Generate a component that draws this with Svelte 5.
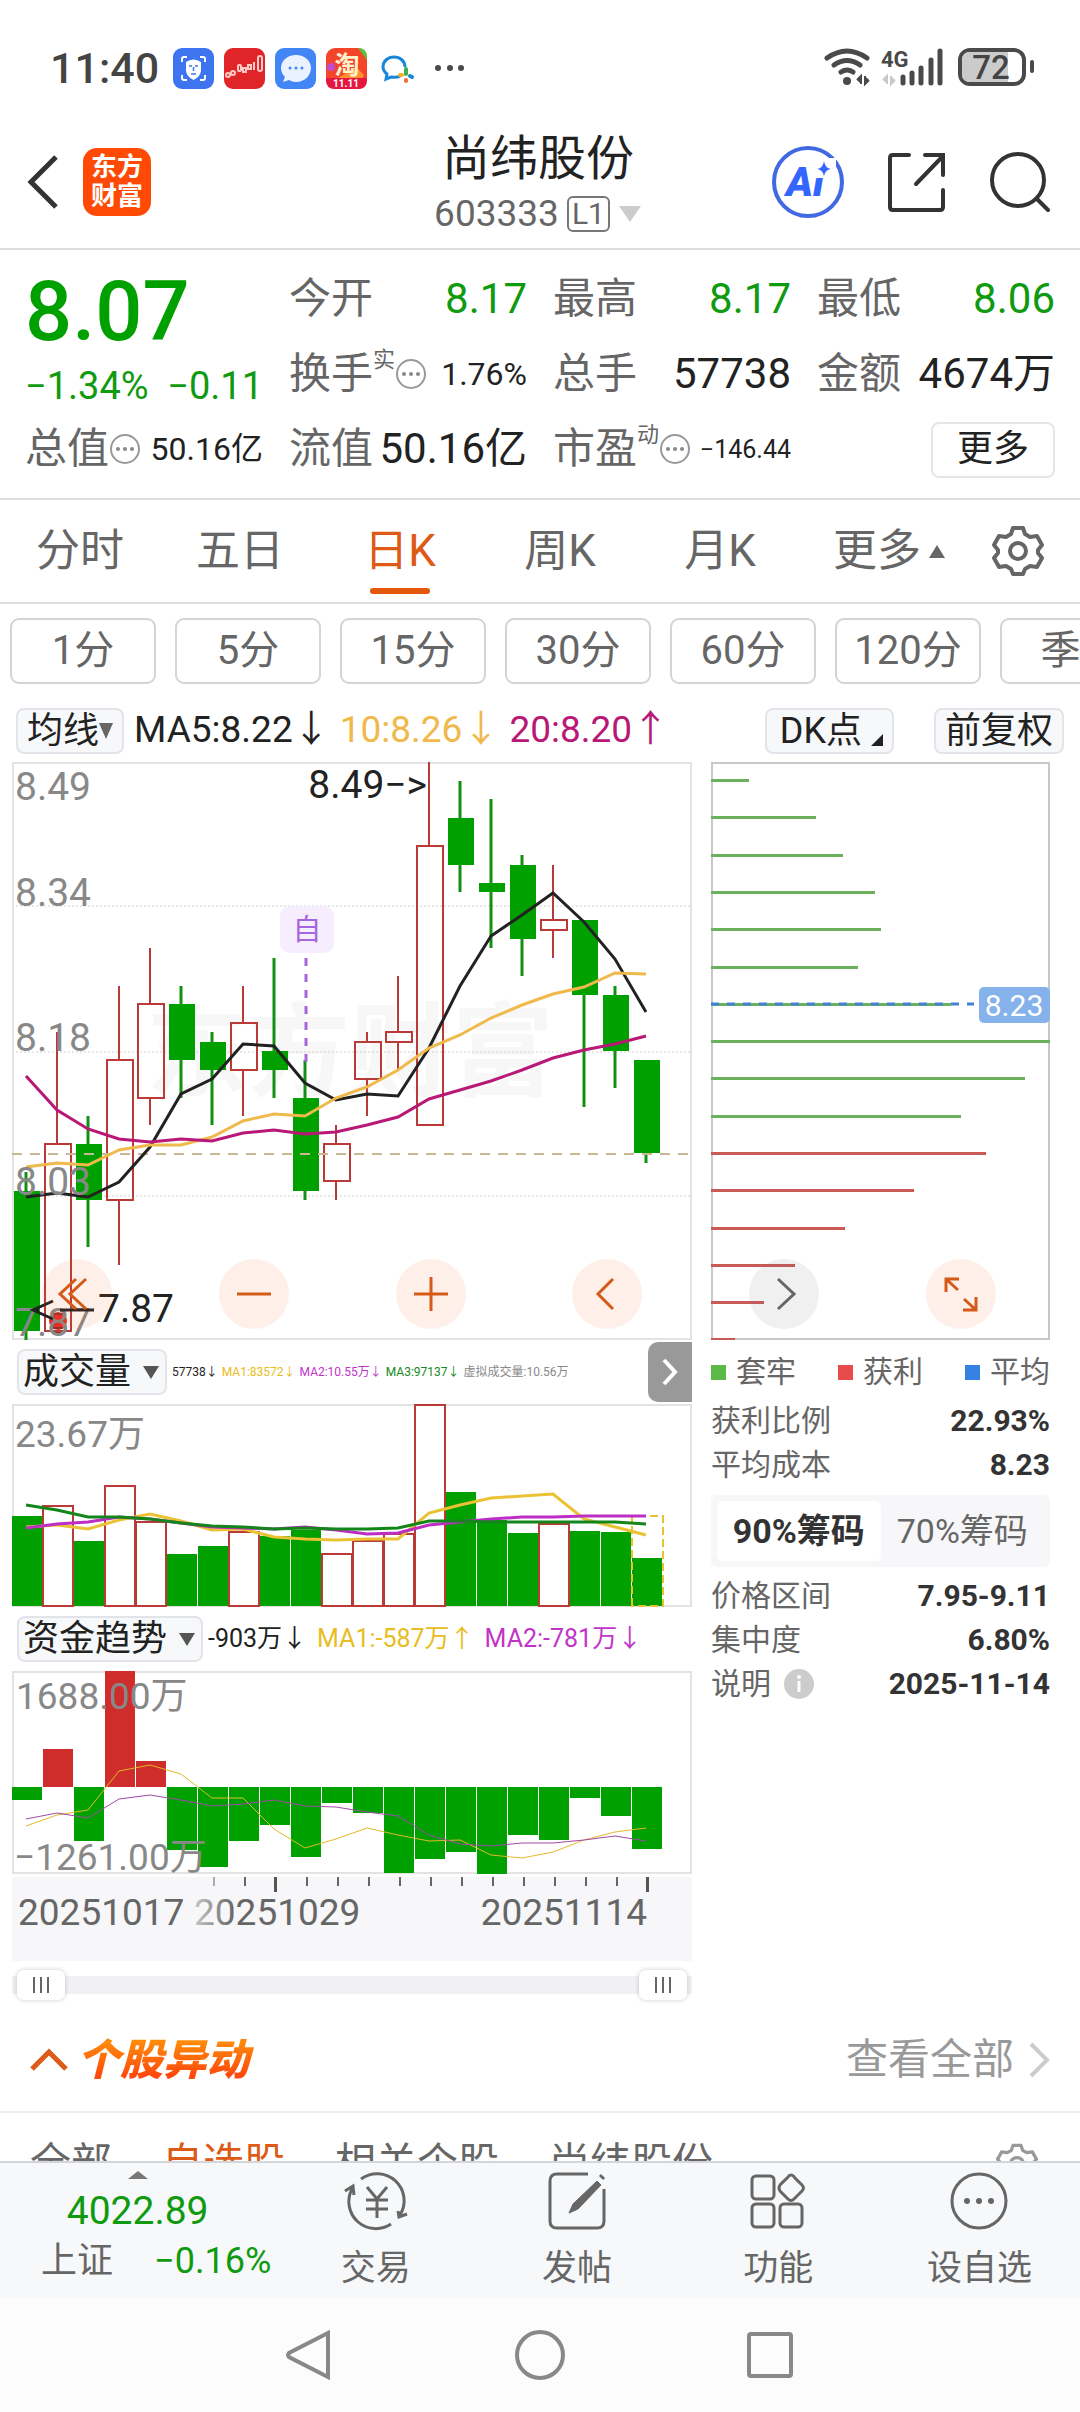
<script lang="ts">
  type Candle = { o: number; c: number; h: number; l: number };

  const STEP = 31;
  const TOP_PRICE = 8.49;
  const PX_PER_YUAN = 932;

  // open, close, high, low
  const candles: Candle[] = [
    [8.03, 7.88, 8.05, 7.87], [7.88, 8.08, 8.2, 7.88], [8.08, 8.02, 8.11, 7.97],
    [8.02, 8.17, 8.25, 7.95], [8.13, 8.23, 8.29, 8.1], [8.23, 8.17, 8.25, 8.13],
    [8.19, 8.16, 8.2, 8.1], [8.16, 8.21, 8.25, 8.11], [8.18, 8.16, 8.28, 8.13],
    [8.13, 8.03, 8.17, 8.02], [8.04, 8.08, 8.1, 8.02], [8.15, 8.19, 8.2, 8.11],
    [8.19, 8.2, 8.26, 8.16], [8.1, 8.4, 8.49, 8.1], [8.43, 8.38, 8.47, 8.35],
    [8.36, 8.35, 8.45, 8.29], [8.38, 8.3, 8.39, 8.26], [8.31, 8.32, 8.38, 8.28],
    [8.32, 8.24, 8.32, 8.12], [8.24, 8.18, 8.25, 8.14], [8.17, 8.07, 8.17, 8.06],
  ].map(([o, c, h, l]) => ({ o, c, h, l }));

  const ma5 = [435, 431, 435, 420, 385, 332, 317, 282, 284, 321, 338, 332, 334, 286, 224, 174, 153, 131, 160, 197, 250];
  const ma10 = [405, 401, 403, 388, 383, 383, 375, 359, 352, 354, 336, 325, 308, 286, 273, 256, 243, 232, 225, 211, 212];
  const ma20 = [314, 348, 367, 377, 380, 377, 379, 371, 368, 372, 370, 363, 355, 337, 328, 319, 308, 296, 288, 282, 274];

  const volumeTops = [112, 102, 137, 82, 118, 150, 142, 128, 132, 126, 150, 137, 130, 1, 88, 116, 129, 120, 127, 128, 154];
  const volMa1 = [123, 121, 125, 116, 110, 117, 126, 125, 133, 135, 136, 135, 135, 109, 101, 94, 92, 90, 115, 123, 131];
  const volMa2 = [124, 120, 118, 113, 115, 119, 123, 124, 125, 123, 126, 130, 129, 121, 118, 115, 113, 113, 112, 112, 112];
  const volMa3 = [101, 106, 113, 113, 115, 119, 122, 123, 125, 124, 125, 125, 124, 117, 117, 118, 118, 118, 118, 118, 120];

  const FUND_ZERO = 116;
  const fundEnds = [129, 78, 170, 0, 90, 179, 196, 170, 154, 186, 132, 142, 202, 188, 181, 203, 164, 169, 127, 145, 178];
  const fundMa1 = [155, 144, 139, 100, 94, 103, 127, 127, 158, 177, 168, 157, 164, 170, 169, 184, 187, 181, 169, 161, 157];
  const fundMa2 = [148, 142, 147, 128, 124, 129, 135, 133, 129, 135, 136, 141, 145, 164, 173, 175, 172, 172, 169, 165, 170];

  const chips = [38, 105, 132, 164, 170, 147, 240, 339, 314, 250, 275, 203, 134, 84, 53, 24];

  const gridLines = [144, 290, 434];
  const priceLabels = [
    { y: 38, text: '8.49' },
    { y: 144, text: '8.34' },
    { y: 289, text: '8.18' },
    { y: 433, text: '8.03' },
    { y: 574, text: '7.87' },
  ];

  const ranges = ['分时', '五日', '日K', '周K', '月K'];
  const minutes = ['1分', '5分', '15分', '30分', '60分', '120分', '季K'];
  const moveTabs = ['全部', '自选股', '相关个股', '尚纬股份'];

  let range = $state('日K');
  let chipShare = $state(90);
  let moveTab = $state('自选股');
  let from = $state(0);
  let to = $state(100);

  const y = (price: number) => Math.round((TOP_PRICE - price) * PX_PER_YUAN);
  const line = (ys: number[]) => ys.map((v, i) => `${14 + STEP * i},${v}`).join(' ');
</script>

{#snippet dots()}
  <svg class="dots" viewBox="0 0 32 32" aria-hidden="true">
    <circle cx="16" cy="16" r="14" fill="none" stroke="#999" stroke-width="2" />
    <circle cx="9" cy="16" r="2" fill="#888" /><circle cx="16" cy="16" r="2" fill="#888" /><circle cx="23" cy="16" r="2" fill="#888" />
  </svg>
{/snippet}

{#snippet gear(stroke: string)}
  <svg class="gear" viewBox="0 0 52 52" fill="none" {stroke} stroke-width="4" stroke-linejoin="round" aria-hidden="true">
    <path d="M21 3h10l2 6 5 3 7-1 5 9-4 5v3l4 5-5 9-7-1-5 3-2 5H21l-2-5-5-3-7 1-5-9 4-5v-3l-4-5 5-9 7 1 5-3z" />
    <circle cx="26" cy="26" r="8" />
  </svg>
{/snippet}

<div class="app">
  <div class="status">
    <div class="status-left">
      <span class="time">11:40</span>
      <svg viewBox="0 0 41 41" aria-hidden="true">
        <rect width="41" height="41" rx="9" fill="#3f74f0" />
        <path d="M9 14v-3q0-2 2-2h3M27 9h3q2 0 2 2v3M32 27v3q0 2-2 2h-3M14 32h-3q-2 0-2-2v-3" fill="none" stroke="#fff" stroke-width="2" />
        <path d="M13 14q7.500-5 15 0v9q-1 6-7.500 9-6.500-3-7.500-9z" fill="#fff" />
        <path d="M16 18h3M22 18h3M20.500 19v4M18 26h5" stroke="#3f74f0" stroke-width="1.500" />
      </svg>
      <svg viewBox="0 0 41 41" aria-hidden="true">
        <rect width="41" height="41" rx="9" fill="#df2527" />
        <g fill="none" stroke="#ffc9c6" stroke-width="2">
          <circle cx="4" cy="27" r="2" /><circle cx="9" cy="25" r="2" />
          <rect x="14" y="17" width="3" height="6" rx="1" /><rect x="19" y="20" width="3" height="4" /><rect x="24" y="17" width="3" height="4" />
          <path d="M30 14v8" /><rect x="34" y="8" width="4" height="15" rx="2" />
        </g>
      </svg>
      <svg viewBox="0 0 41 41" aria-hidden="true">
        <rect width="41" height="41" rx="9" fill="#4285f4" />
        <path d="M21 7c9 0 15 6 15 13s-6 14-15 14q-4 0-7-2l-6 2 2-5q-4-4-4-9C6 13 12 7 21 7z" fill="#eaf2ff" />
        <circle cx="15" cy="20" r="1.500" fill="#4285f4" /><circle cx="21" cy="20" r="1.500" fill="#4285f4" /><circle cx="27" cy="20" r="1.500" fill="#4285f4" />
      </svg>
      <svg viewBox="0 0 41 41" aria-hidden="true">
        <rect width="41" height="41" rx="9" fill="#f2452c" />
        <path d="M32 0q9 0 9 9v3z" fill="#5fc13b" />
        <circle cx="5" cy="19" r="4" fill="#c44bd0" />
        <path d="M12 30l18-11 8 8-2 4z" fill="#ff9331" />
        <path d="M0 30h41v2q0 9-9 9H9q-9 0-9-9z" fill="#e5163f" />
        <text x="21" y="26" font-size="25" font-weight="700" fill="#fff3cf" text-anchor="middle">淘</text>
        <text x="20" y="39" font-size="10" font-weight="700" fill="#fff" text-anchor="middle">11.11</text>
      </svg>
      <svg viewBox="0 0 41 41" aria-hidden="true">
        <path d="M28 19c0-6-5-10-11-10S6 13 6 19q0 4 4 7l-1 5 5-2q6 1 9-1" fill="none" stroke="#1a86d9" stroke-width="3" />
        <path d="M29 21v5" stroke="#3bb34a" stroke-width="4" stroke-linecap="round" /><path d="M33 28l2 1" stroke="#1a86d9" stroke-width="4" stroke-linecap="round" />
        <path d="M29 32v1" stroke="#f26b3a" stroke-width="4" stroke-linecap="round" /><path d="M23 27h2" stroke="#f7b32b" stroke-width="4" stroke-linecap="round" />
      </svg>
      <svg viewBox="0 0 41 41" aria-hidden="true" fill="#4a4a4a">
        <circle cx="10" cy="20" r="3" /><circle cx="22" cy="20" r="3" /><circle cx="33" cy="20" r="3" />
      </svg>
    </div>
    <svg class="signal" viewBox="0 0 210 42" aria-hidden="true">
      <g fill="none" stroke="#4a4a4a" stroke-width="5" stroke-linecap="round">
        <path d="M3 11q20-14 40 0M10 18q13-9 26 0M17 25q6-4 12 0" />
      </g>
      <circle cx="23" cy="34" r="4" fill="#4a4a4a" />
      <path d="M33 33l4-4v8M41 29v8l4-4" fill="#4a4a4a" stroke="#4a4a4a" stroke-width="2" />
      <text x="57" y="20" font-size="22" font-weight="700" fill="#4a4a4a">4G</text>
      <path d="M59 33l4-4v8M67 29v8l4-4" fill="#c9c9c9" stroke="#c9c9c9" stroke-width="2" />
      <path d="M79 30v6M88 26v10M97 21v15M107 13v23M116 4v32" stroke="#4a4a4a" stroke-width="5" stroke-linecap="round" />
      <rect x="136" y="3" width="64" height="34" rx="10" fill="#fff" stroke="#4a4a4a" stroke-width="4" />
      <path d="M146 5h38v30h-38q-8 0-8-8V13q0-8 8-8z" fill="#cbcbcb" />
      <path d="M208 15v9" stroke="#4a4a4a" stroke-width="4" stroke-linecap="round" />
      <text x="167" y="32" font-size="33" font-weight="500" fill="#444" text-anchor="middle">72</text>
    </svg>
  </div>

  <header>
    <div class="side">
      <button class="plain" aria-label="返回">
        <svg width="34" height="56" viewBox="0 0 34 56"><path d="M30 3L5 28l25 25" fill="none" stroke="#333" stroke-width="5" /></svg>
      </button>
      <div class="logo">东方<br />财富</div>
    </div>
    <div class="title">
      <h1>尚纬股份</h1>
      <div class="code">603333<span class="level">L1</span>
        <svg width="24" height="16" viewBox="0 0 24 16"><path d="M1 0h22L12 16z" fill="#ccc" /></svg>
      </div>
    </div>
    <div class="side right">
      <button class="plain" aria-label="Ai">
        <svg width="72" height="72" viewBox="0 0 72 72">
          <circle cx="36" cy="36" r="34" fill="none" stroke="#4169e1" stroke-width="4" />
          <text x="14" y="50" font-size="41" font-weight="900" font-style="italic" fill="#3366ff">Ai</text>
          <path d="M40 12h24v20H40z" fill="#fff" />
          <path d="M52 15q1 7 7 8-6 1-7 7-1-6-7-7 6-1 7-8z" fill="#3366ff" />
        </svg>
      </button>
      <button class="plain" aria-label="分享">
        <svg width="58" height="60" viewBox="0 0 58 60" fill="none" stroke="#333" stroke-width="4" stroke-linecap="round">
          <path d="M21 3H5q-3 0-3 3v49q0 3 3 3h47q3 0 3-3V38M37 3h18v20M55 4L28 32" />
        </svg>
      </button>
      <button class="plain" aria-label="搜索">
        <svg width="60" height="60" viewBox="0 0 60 60" fill="none" stroke="#333" stroke-width="4" stroke-linecap="round">
          <circle cx="28" cy="28" r="26" /><path d="M47 47l11 11" />
        </svg>
      </button>
    </div>
  </header>

  <main>
    <section class="stats">
      <div class="quote down">
        <strong>8.07</strong>
        <div><span>−1.34%</span><span>−0.11</span></div>
      </div>
      <div class="cell"><span>今开</span><b class="down">8.17</b></div>
      <div class="cell"><span>最高</span><b class="down">8.17</b></div>
      <div class="cell"><span>最低</span><b class="down">8.06</b></div>
      <div class="cell"><span>换手<i>实</i>{@render dots()}</span><b class="mid">1.76%</b></div>
      <div class="cell"><span>总手</span><b>57738</b></div>
      <div class="cell"><span>金额</span><b>4674万</b></div>
      <div class="cell"><span>总值{@render dots()}</span><b class="mid">50.16亿</b></div>
      <div class="cell"><span>流值</span><b>50.16亿</b></div>
      <div class="cell"><span>市盈<i>动</i>{@render dots()}</span><b class="small">−146.44</b></div>
      <div class="cell end"><button class="more">更多</button></div>
    </section>

    <nav class="ranges">
      {#each ranges as r}
        <button class:active={range === r} onclick={() => (range = r)}>{r}</button>
      {/each}
      <button class="wide">更多<svg width="16" height="13" viewBox="0 0 16 13"><path d="M8 0l8 13H0z" fill="#666" /></svg></button>
      <button class="set" aria-label="设置">{@render gear('#666')}</button>
    </nav>

    <div class="minutes">
      {#each minutes as m}<button>{m}</button>{/each}
    </div>

    <div class="averages">
      <button class="pill">均线<svg width="14" height="16" viewBox="0 0 14 16"><path d="M0 0h14L7 16z" fill="#666" /></svg></button>
      <span>MA5:8.22↓</span>
      <span class="gold">10:8.26↓</span>
      <span class="magenta">20:8.20↑</span>
      <button class="pill dk">DK点<svg width="12" height="12" viewBox="0 0 12 12"><path d="M12 0v12H0z" fill="#222" /></svg></button>
      <button class="pill">前复权</button>
    </div>

    <div class="charts split">
      <svg viewBox="0 0 680 578" class="price">
        <text x="134" y="326" font-size="102" font-weight="700" fill="#f7f7f7">东方财富</text>
        {#each gridLines as g}
          <path d="M0 {g}H680" stroke="#d0d0d0" stroke-dasharray="2 2" />
        {/each}
        <rect x="1" y="1" width="678" height="576" fill="none" stroke="#e3e3e3" stroke-width="2" />
        {#each candles as k, i}
          {@const x = STEP * i}
          {#if k.c > k.o}
            <path d="M{x + 14} {y(k.h)}V{y(k.c)}M{x + 14} {y(k.o)}V{y(k.l)}" stroke="#b93a36" stroke-width="2" />
            <rect x={x + 2} y={y(k.c)} width="26" height={y(k.o) - y(k.c)} fill="none" stroke="#b93a36" stroke-width="2" />
          {:else}
            <path d="M{x + 14} {y(k.h)}V{y(k.l)}" stroke="#129012" stroke-width="3" />
            <rect x={x + 2} y={y(k.o)} width="26" height={y(k.c) - y(k.o)} fill="#00a000" />
          {/if}
        {/each}
        <path d="M0 392H680" stroke="#c9b795" stroke-width="2" stroke-dasharray="10 8" />
        <polyline points={line(ma5)} fill="none" stroke="#222" stroke-width="3" />
        <polyline points={line(ma10)} fill="none" stroke="#f0b94b" stroke-width="3" />
        <polyline points={line(ma20)} fill="none" stroke="#b81876" stroke-width="3" />
        <rect x="268" y="144" width="54" height="47" rx="10" fill="#f6edff" />
        <text x="295" y="178" font-size="29" fill="#a566df" text-anchor="middle">自</text>
        <path d="M294 196v104" stroke="#a566d8" stroke-width="3" stroke-dasharray="8 8" />
        <ellipse cx="46" cy="559" rx="9" ry="9" fill="#e92a25" />
        <path d="M41 552h10M41 566h10M43 571h6" stroke="#8f3328" stroke-width="2" />
        {#each priceLabels as p}
          <text x="3" y={p.y} font-size="39" fill="#888">{p.text}</text>
        {/each}
        <text x="415" y="36" font-size="39" fill="#222" text-anchor="end">8.49−&gt;</text>
        <path d="M41 539l-20 9 20 9M21 548h6M48 548h34" fill="none" stroke="#222" stroke-width="3" />
        <text x="86" y="560" font-size="39" fill="#222">7.87</text>
      </svg>

      <svg viewBox="0 0 339 578" class="chips">
        <rect x="1" y="1" width="337" height="576" fill="none" stroke="#c8c8c8" stroke-width="2" />
        {#each chips as w, i}
          <rect x="0" y={Math.min(17 + Math.round(i * 37.3), 576)} width={w} height="3" fill={i < 10 ? '#6bb05c' : '#c95a56'} />
        {/each}
        <path d="M0 242H263" stroke="#3f82d8" stroke-width="3" stroke-dasharray="8 8" />
        <rect x="268" y="225" width="71" height="36" rx="5" fill="#86b2eb" />
        <text x="303" y="254" font-size="30" fill="#fff" text-anchor="middle">8.23</text>
      </svg>

      <div class="controls">
        <button aria-label="最左"><svg viewBox="0 0 70 70"><path d="M34 20L18 35l16 15M44 20L28 35l16 15" /></svg></button>
        <button aria-label="缩小"><svg viewBox="0 0 70 70"><path d="M18 35h34" /></svg></button>
        <button aria-label="放大"><svg viewBox="0 0 70 70"><path d="M18 35h34M35 18v34" /></svg></button>
        <button aria-label="左移"><svg viewBox="0 0 70 70"><path d="M41 20L26 35l15 15" /></svg></button>
        <button class="gray" aria-label="右移"><svg viewBox="0 0 70 70"><path d="M29 20l16 15-16 15" /></svg></button>
        <button aria-label="全屏"><svg viewBox="0 0 70 70"><path d="M33 20H20v13M20 20l12 11M37 51h13V38M50 51L38 40" /></svg></button>
      </div>
    </div>

    <div class="split detail">
      <div class="indicators">
        <div class="bar">
          <button class="pill">成交量<svg width="16" height="13" viewBox="0 0 16 13"><path d="M0 0h16L8 13z" fill="#555" /></svg></button>
          <p class="tiny">
            <span>57738↓</span><span class="yellow">MA1:83572↓</span><span class="purple">MA2:10.55万↓</span><span class="green">MA3:97137↓</span><span class="dim">虚拟成交量:10.56万</span>
          </p>
          <button class="expand" aria-label="展开"><svg width="20" height="30" viewBox="0 0 20 30"><path d="M4 3l11 12L4 27" fill="none" stroke="#fff" stroke-width="4" /></svg></button>
        </div>
        <svg viewBox="0 0 680 203">
          <rect x="1" y="1" width="678" height="201" fill="none" stroke="#e3e3e3" stroke-width="2" />
          {#each volumeTops as top, i}
            {#if candles[i].c > candles[i].o}
              <rect x={STEP * i} y={top} width="30" height={202 - top} fill="#fff" stroke="#b93a36" stroke-width="2" />
            {:else}
              <rect x={STEP * i} y={top} width="30" height={202 - top} fill="#00a000" />
            {/if}
          {/each}
          <path d="M620 202V112h31v90z" fill="none" stroke="#e8c22c" stroke-width="2" stroke-dasharray="8 4" />
          <polyline points={line(volMa1)} fill="none" stroke="#eac233" stroke-width="3" />
          <polyline points={line(volMa2)} fill="none" stroke="#bd2fc4" stroke-width="3" />
          <polyline points={line(volMa3)} fill="none" stroke="#14851a" stroke-width="3" />
          <text x="3" y="43" font-size="37" fill="#888">23.67万</text>
        </svg>
        <div class="bar">
          <button class="pill">资金趋势<svg width="16" height="13" viewBox="0 0 16 13"><path d="M0 0h16L8 13z" fill="#555" /></svg></button>
          <p><span>-903万↓</span><span class="yellow">MA1:-587万↑</span><span class="purple">MA2:-781万↓</span></p>
        </div>
        <svg viewBox="0 0 680 203">
          <rect x="1" y="1" width="678" height="201" fill="none" stroke="#e3e3e3" stroke-width="2" />
          {#each fundEnds as end, i}
            <rect x={STEP * i} y={Math.min(end, FUND_ZERO)} width="30" height={Math.abs(end - FUND_ZERO)} fill={end < FUND_ZERO ? '#cf2d2b' : '#00a000'} />
          {/each}
          <polyline points={line(fundMa1)} fill="none" stroke="#e3b92a" stroke-width="1" />
          <polyline points={line(fundMa2)} fill="none" stroke="#a04aa8" stroke-width="1" />
          <text x="4" y="38" font-size="37" fill="#888">1688.00万</text>
          <text x="2" y="199" font-size="37" fill="#888">−1261.00万</text>
        </svg>
        <svg viewBox="0 0 680 84" class="axis">
          <defs>
            <linearGradient id="fade" gradientUnits="userSpaceOnUse" x1="180" x2="222" y1="0" y2="0">
              <stop offset="0" stop-color="#ccc" /><stop offset="1" stop-color="#666" />
            </linearGradient>
          </defs>
          {#each candles as _, i}
            {#if i === 8 || i === 20}
              <rect x={14 + STEP * i} y="0" width="3" height="15" fill="#555" />
            {:else if i > 5}
              <rect x={15 + STEP * i} y="0" width="2" height="9" fill={i === 6 ? '#aaa' : '#666'} />
            {/if}
          {/each}
          <text x="6" y="48" font-size="37" fill="#666">20251017</text>
          <text x="182" y="48" font-size="37" fill="url(#fade)">20251029</text>
          <text x="635" y="48" font-size="37" fill="#666" text-anchor="end">20251114</text>
        </svg>
        <div class="scrub">
          <input type="range" aria-label="起始" min="0" max="100" bind:value={from} />
          <input type="range" aria-label="结束" min="0" max="100" bind:value={to} />
        </div>
      </div>

      <div class="panel">
        <div class="legend">
          <span><i style:background="#5cb947"></i>套牢</span>
          <span><i style:background="#e84c4a"></i>获利</span>
          <span><i style:background="#3682e2"></i>平均</span>
        </div>
        <dl>
          <div><dt>获利比例</dt><dd>22.93%</dd></div>
          <div><dt>平均成本</dt><dd>8.23</dd></div>
        </dl>
        <div class="segment">
          <button class:on={chipShare === 90} onclick={() => (chipShare = 90)}>90%筹码</button>
          <button class:on={chipShare === 70} onclick={() => (chipShare = 70)}>70%筹码</button>
        </div>
        <dl>
          <div><dt>价格区间</dt><dd>7.95-9.11</dd></div>
          <div><dt>集中度</dt><dd>6.80%</dd></div>
          <div>
            <dt>说明
              <svg width="30" height="30" viewBox="0 0 30 30" aria-hidden="true"><circle cx="15" cy="15" r="15" fill="#ccc" /><circle cx="15" cy="8" r="2" fill="#fff" /><path d="M15 12v11" stroke="#fff" stroke-width="3" /></svg>
            </dt>
            <dd>2025-11-14</dd>
          </div>
        </dl>
      </div>
    </div>

    <section class="moves">
      <div class="moves-head">
        <svg width="38" height="24" viewBox="0 0 38 24"><path d="M2 21L19 4l17 17" fill="none" stroke="#dd5a17" stroke-width="5" /></svg>
        <h2>个股异动</h2>
        <a href="#all">查看全部<svg width="22" height="36" viewBox="0 0 22 36"><path d="M3 2l16 16L3 34" fill="none" stroke="#ccc" stroke-width="4" /></svg></a>
      </div>
      <div class="moves-tabs">
        {#each moveTabs as t}
          <button class:active={moveTab === t} onclick={() => (moveTab = t)}>{t}</button>
        {/each}
        <button class="set" aria-label="筛选设置">{@render gear('#999')}</button>
      </div>
    </section>
  </main>

  <footer>
    <button class="index">
      <svg width="20" height="8" viewBox="0 0 20 8"><path d="M10 0l10 8H0z" fill="#777" /></svg>
      <span class="down big">4022.89</span>
      <span class="row">上证<span class="down">−0.16%</span></span>
    </button>
    <button>
      <svg viewBox="0 0 64 60">
        <path d="M17 8a27 27 0 0 1 39 36M54 40l1 6 8-3M47 53A27 27 0 0 1 8 18M1 20l8-5 1 9M23 16l10 12 10-12M33 28v19M22 29h22M22 38h22" />
      </svg>
      交易
    </button>
    <button>
      <svg viewBox="0 0 64 60">
        <path d="M43 3H12q-7 0-7 7v40q0 7 7 7h40q7 0 7-7V18" />
        <path d="M52 10L28 33l-4 9 9-4 23-24z" fill="#666" stroke-width="1" /><path d="M56 7l2-2" stroke-width="6" />
      </svg>
      发帖
    </button>
    <button>
      <svg viewBox="0 0 64 60">
        <rect x="6" y="5" width="22" height="23" rx="4" /><rect x="6" y="33" width="22" height="23" rx="4" /><rect x="34" y="33" width="22" height="23" rx="4" />
        <path d="M45 4q2 0 4 3l7 7q3 3 0 6l-8 8q-3 3-6 0l-8-8q-2-3 0-6l8-8q1-2 3-2z" />
      </svg>
      功能
    </button>
    <button>
      <svg viewBox="0 0 64 60">
        <circle cx="32" cy="30" r="27" />
        <g fill="#666" stroke="none"><circle cx="20" cy="30" r="3" /><circle cx="32" cy="30" r="3" /><circle cx="44" cy="30" r="3" /></g>
      </svg>
      设自选
    </button>
  </footer>

  <div class="system">
    <button class="plain" aria-label="后退"><svg viewBox="0 0 52 52"><path d="M44 4v44L5 28q-2-2 0-4z" /></svg></button>
    <button class="plain" aria-label="主页"><svg viewBox="0 0 52 52"><circle cx="26" cy="26" r="23" /></svg></button>
    <button class="plain" aria-label="最近"><svg viewBox="0 0 52 52"><rect x="5" y="5" width="42" height="42" rx="2" /></svg></button>
  </div>
</div>

<style>
  :global(body) { background: #fff; }

  .app {
    display: flex;
    flex-direction: column;
    height: 100vh;
    font-family: Roboto, 'Noto Sans CJK SC', sans-serif;
    line-height: 1.2;
    color: #222;
    background: #fff;
  }
  .app * { box-sizing: border-box; }
  svg { display: block; flex: none; }
  button {
    display: flex;
    align-items: center;
    justify-content: center;
    padding: 0;
    border: 0;
    background: none;
    font: inherit;
    color: inherit;
    white-space: nowrap;
  }
  .down { color: #109a10; }

  .status {
    display: flex;
    flex: none;
    align-items: center;
    justify-content: space-between;
    height: 112px;
    padding: 24px 46px 0 50px;
  }
  .status-left { display: flex; align-items: center; gap: 10px; }
  .status-left svg { width: 41px; height: 41px; }
  .time { font-size: 43px; font-weight: 500; color: #444; line-height: 42px; margin-right: 4px; }
  .signal { width: 210px; height: 42px; }

  header {
    display: grid;
    grid-template-columns: 1fr auto 1fr;
    flex: none;
    align-items: center;
    height: 138px;
    padding: 4px 30px 0 26px;
    border-bottom: 2px solid #ddd;
  }
  .side { display: flex; align-items: center; gap: 23px; }
  .side.right { justify-content: flex-end; gap: 44px; }
  .logo {
    width: 68px;
    height: 68px;
    padding: 5px 0;
    border-radius: 14px;
    background: #ff4a06;
    color: #fff;
    font-size: 26px;
    font-weight: 700;
    line-height: 29px;
    text-align: center;
  }
  h1 { margin: 0; font-size: 48px; font-weight: 400; line-height: 64px; text-align: center; }
  .code { display: flex; align-items: center; justify-content: center; gap: 8px; font-size: 37px; line-height: 46px; color: #666; }
  .level { padding: 0 3px; border: 2px solid #777; border-radius: 6px; font-size: 30px; line-height: 32px; }

  main { flex: 1; min-height: 0; overflow: hidden; }

  .stats {
    display: grid;
    grid-template-columns: repeat(4, 1fr);
    grid-auto-rows: 75px;
    column-gap: 26px;
    padding: 12px 25px 11px;
    border-bottom: 2px solid #ddd;
  }
  .quote { grid-row: span 2; font-size: 38px; }
  .quote strong { display: block; font-size: 83px; font-weight: 500; line-height: 100px; color: #00a000; }
  .quote div { display: flex; justify-content: space-between; line-height: 48px; }
  .cell { display: flex; align-items: center; justify-content: space-between; font-size: 42px; white-space: nowrap; }
  .cell span { display: flex; align-items: center; color: #666; }
  .cell i { align-self: flex-start; font-size: 22px; font-style: normal; line-height: 22px; }
  .cell b { font-weight: 400; }
  .cell .mid { font-size: 32px; }
  .cell .small { font-size: 25px; }
  .cell.end { justify-content: flex-end; }
  .dots { width: 32px; height: 32px; }
  .more { width: 124px; height: 56px; border: 2px solid #e6e6e6; border-radius: 8px; font-size: 36px; }

  .ranges { display: flex; height: 104px; padding-right: 22px; border-bottom: 2px solid #ddd; font-size: 44px; color: #666; }
  .ranges button { position: relative; flex: 160 1 0; }
  .ranges .wide { flex-grow: 178; gap: 8px; }
  .ranges .set { flex-grow: 80; }
  .ranges .active { color: #dd5a17; }
  .ranges .active::after {
    content: '';
    position: absolute;
    bottom: 8px;
    width: 60px;
    height: 6px;
    border-radius: 3px;
    background: #e2570a;
  }
  .gear { width: 52px; height: 52px; }

  .minutes { display: flex; gap: 19px; padding: 14px 10px 15px; overflow: hidden; font-size: 40px; color: #666; }
  .minutes button { flex: 0 0 146px; height: 66px; border: 2px solid #d4d4d4; border-radius: 9px; }

  .pill {
    flex: none;
    gap: 4px;
    height: 46px;
    padding: 0 9px;
    border: 2px solid #e2e4e9;
    border-radius: 8px;
    background: #f7f8fa;
    font-size: 36px;
    line-height: 42px;
  }
  .averages { display: flex; align-items: center; gap: 10px; height: 63px; padding: 0 16px; font-size: 37px; white-space: nowrap; }
  .averages .pill { padding: 0 9px; gap: 0; }
  .averages .dk { margin-left: auto; margin-right: 30px; padding-left: 13px; gap: 9px; }
  .dk svg { align-self: flex-end; margin-bottom: 6px; }
  .gold { color: #f0b94b; }
  .magenta { color: #b81876; }

  .split { display: grid; grid-template-columns: 680fr 339fr; column-gap: 19px; padding: 0 30px 0 12px; }
  .charts { position: relative; }
  .charts > svg, .indicators > svg { width: 100%; height: auto; }
  .controls {
    position: absolute;
    left: 42px;
    right: 84px;
    bottom: 11px;
    display: flex;
    justify-content: space-between;
  }
  .controls button { width: 70px; height: 70px; border-radius: 50%; background: rgba(247, 112, 40, 0.1); }
  .controls svg { width: 70px; height: 70px; fill: none; stroke: #d45a18; stroke-width: 3; }
  .controls .gray { background: rgba(110, 110, 110, 0.1); }
  .controls .gray svg { stroke: #666; }

  .bar { display: flex; align-items: center; gap: 5px; height: 64px; padding-left: 5px; font-size: 25px; white-space: nowrap; }
  .bar .pill { gap: 12px; padding: 0 6px 0 4px; }
  .bar p { display: flex; gap: 10px; margin: 0; }
  .bar .tiny { gap: 4px; font-size: 12px; }
  .expand { width: 44px; height: 60px; margin-left: auto; border-radius: 10px 0 0 10px; background: #999; }
  .yellow { color: #e8bd22; }
  .purple { color: #c233c9; }
  .green { color: #148a1c; }
  .dim { color: #888; }
  .indicators .axis { margin-top: 3px; background: #f7f7f9; }

  .scrub { display: grid; align-items: center; height: 30px; margin-top: 9px; padding: 0 5px; border-radius: 9px; background: linear-gradient(#f1f1f4, #f1f1f4) center / 100% 18px no-repeat; }
  .scrub input {
    grid-area: 1 / 1;
    width: 100%;
    height: 30px;
    margin: 0;
    appearance: none;
    background: none;
    pointer-events: none;
  }
  .scrub input::-webkit-slider-thumb {
    appearance: none;
    width: 48px;
    height: 30px;
    border-radius: 7px;
    background:
      linear-gradient(#666, #666) 16px 7px / 2px 16px no-repeat,
      linear-gradient(#666, #666) 23px 7px / 2px 16px no-repeat,
      linear-gradient(#666, #666) 30px 7px / 2px 16px no-repeat,
      #fff;
    box-shadow: 0 0 5px rgba(0, 0, 0, 0.2);
    pointer-events: auto;
  }

  .panel { font-size: 30px; color: #666; }
  .legend { display: flex; align-items: center; justify-content: space-between; height: 59px; padding-top: 5px; }
  .legend span { display: flex; align-items: center; gap: 10px; }
  .legend i { width: 15px; height: 15px; }
  dl { margin: 0; }
  dl div { display: flex; align-items: center; justify-content: space-between; height: 44px; }
  dt { display: flex; align-items: center; gap: 13px; }
  dd { margin: 0; font-weight: 700; color: #333; }
  .segment { display: flex; height: 72px; margin: 8px 0 7px; padding: 6px; border-radius: 6px; background: #f7f7f9; font-size: 34px; }
  .segment button { flex: 1 1 0; border-radius: 6px; }
  .segment .on { background: #fff; color: #333; font-weight: 700; }

  .moves { margin-top: 9px; }
  .moves-head { display: flex; align-items: center; height: 104px; padding: 0 30px; border-bottom: 2px solid #eee; }
  h2 {
    margin: 0 0 0 9px;
    padding-right: 8px;
    font-size: 43px;
    font-weight: 900;
    font-style: italic;
    line-height: 60px;
    color: transparent;
    background: linear-gradient(#ff8a0a 20%, #ff4a0c 75%);
    background-clip: text;
  }
  .moves-head a { display: flex; align-items: center; gap: 14px; margin-left: auto; font-size: 42px; color: #999; text-decoration: none; }
  .moves-tabs { display: flex; gap: 50px; height: 102px; padding: 0 42px 0 30px; font-size: 41px; color: #666; }
  .moves-tabs .active { color: #dd5a17; }
  .moves-tabs .set { margin-left: auto; }
  .moves-tabs .gear { width: 42px; height: 42px; }

  footer {
    display: flex;
    flex: none;
    height: 137px;
    border-top: 2px solid #d3d5d8;
    background: #f6f8fa;
    font-size: 35px;
    line-height: 48px;
    color: #666;
  }
  footer button { flex: 201 1 0; flex-direction: column; justify-content: flex-start; gap: 14px; padding-top: 8px; }
  footer button > svg { width: 64px; height: 60px; fill: none; stroke: #666; stroke-width: 3; }
  footer .index { flex-grow: 275; gap: 0; }
  footer .index > svg { width: 20px; height: 8px; stroke: none; }
  .big { font-size: 39px; line-height: 48px; margin-top: 8px; }
  .row { display: flex; align-self: stretch; justify-content: space-between; padding: 0 4px 0 41px; font-size: 36px; line-height: 52px; }

  .system { display: flex; flex: none; align-items: center; justify-content: center; gap: 178px; height: 114px; background: #fcfcfc; }
  .system svg { width: 52px; height: 52px; fill: none; stroke: #888; stroke-width: 4; }
</style>
